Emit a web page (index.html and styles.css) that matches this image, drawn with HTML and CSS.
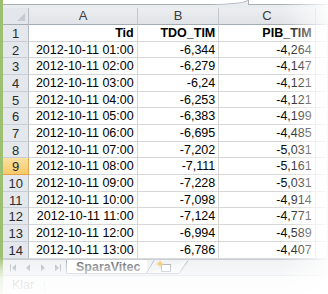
FILE: index.html
```html
<!DOCTYPE html>
<html lang="sv">
<head>
<meta charset="UTF-8">
<title>SparaVitec</title>
<link rel="stylesheet" href="styles.css">
</head>
<body>
  <div class="window">
    <div class="edge"></div>
    <div class="main">
      <div class="formula-area">
        <div class="formula-box"></div>
        <div class="right-box"></div>
      </div>

      <div class="sheet">
        <div class="corner"><span class="tri"></span></div>
        <div class="colhead">A</div>
        <div class="colhead">B</div>
        <div class="colhead">C</div>
        <div class="colhead last"></div>

        <div class="rowhead">1</div>
        <div class="cell bold">Tid</div>
        <div class="cell bold">TDO_TIM</div>
        <div class="cell bold">PIB_TIM</div>
        <div class="cell"></div>

        <div class="rowhead">2</div>
        <div class="cell">2012-10-11 01:00</div>
        <div class="cell">-6,344</div>
        <div class="cell">-4,264</div>
        <div class="cell"></div>

        <div class="rowhead">3</div>
        <div class="cell">2012-10-11 02:00</div>
        <div class="cell">-6,279</div>
        <div class="cell">-4,147</div>
        <div class="cell"></div>

        <div class="rowhead">4</div>
        <div class="cell">2012-10-11 03:00</div>
        <div class="cell">-6,24</div>
        <div class="cell">-4,121</div>
        <div class="cell"></div>

        <div class="rowhead">5</div>
        <div class="cell">2012-10-11 04:00</div>
        <div class="cell">-6,253</div>
        <div class="cell">-4,121</div>
        <div class="cell"></div>

        <div class="rowhead">6</div>
        <div class="cell">2012-10-11 05:00</div>
        <div class="cell">-6,383</div>
        <div class="cell">-4,199</div>
        <div class="cell"></div>

        <div class="rowhead">7</div>
        <div class="cell">2012-10-11 06:00</div>
        <div class="cell">-6,695</div>
        <div class="cell">-4,485</div>
        <div class="cell"></div>

        <div class="rowhead">8</div>
        <div class="cell">2012-10-11 07:00</div>
        <div class="cell">-7,202</div>
        <div class="cell">-5,031</div>
        <div class="cell"></div>

        <div class="rowhead sel">9</div>
        <div class="cell">2012-10-11 08:00</div>
        <div class="cell">-7,111</div>
        <div class="cell">-5,161</div>
        <div class="cell"></div>

        <div class="rowhead">10</div>
        <div class="cell">2012-10-11 09:00</div>
        <div class="cell">-7,228</div>
        <div class="cell">-5,031</div>
        <div class="cell"></div>

        <div class="rowhead">11</div>
        <div class="cell">2012-10-11 10:00</div>
        <div class="cell">-7,098</div>
        <div class="cell">-4,914</div>
        <div class="cell"></div>

        <div class="rowhead">12</div>
        <div class="cell">2012-10-11 11:00</div>
        <div class="cell">-7,124</div>
        <div class="cell">-4,771</div>
        <div class="cell"></div>

        <div class="rowhead">13</div>
        <div class="cell">2012-10-11 12:00</div>
        <div class="cell">-6,994</div>
        <div class="cell">-4,589</div>
        <div class="cell"></div>

        <div class="rowhead">14</div>
        <div class="cell">2012-10-11 13:00</div>
        <div class="cell">-6,786</div>
        <div class="cell">-4,407</div>
        <div class="cell"></div>
      </div>

      <div class="tabs">
        <div class="nav">
          <svg width="8" height="8" viewBox="0 0 8 8"><rect x="1" y="0.5" width="1" height="7"/><path d="M7 0.5 L3 4 L7 7.5 Z"/></svg>
          <svg width="8" height="8" viewBox="0 0 8 8"><path d="M6 0.5 L2 4 L6 7.5 Z"/></svg>
          <svg width="8" height="8" viewBox="0 0 8 8"><path d="M2 0.5 L6 4 L2 7.5 Z"/></svg>
          <svg width="8" height="8" viewBox="0 0 8 8"><path d="M1 0.5 L5 4 L1 7.5 Z"/><rect x="6" y="0.5" width="1" height="7"/></svg>
        </div>
        <div class="tab">SparaVitec</div>
        <svg class="newtab" width="46" height="16" viewBox="0 0 46 16">
          <path d="M0 13.5 L8 0.5" stroke="#9aa3ad" fill="none"/>
          <path d="M0 13.5 L33 13.5 L42 0.5" stroke="#9aa3ad" fill="#f4f5f7"/>
          <rect x="15.5" y="4.5" width="9" height="7" fill="#fff" stroke="#8a939c"/>
          <circle cx="14" cy="4" r="2.2" fill="#f2b84b"/>
          <path d="M14 0.5 V7.5 M10.5 4 H17.5" stroke="#f2b84b" stroke-width="0.9"/>
        </svg>
      </div>

      <div class="status">
        <span class="ready">Klar</span>
        <span class="sep"></span>
      </div>
    </div>
    <div class="fade-right"></div>
    <div class="fade-bottom"></div>
  </div>
</body>
</html>
```

FILE: styles.css
```css
* {
  box-sizing: border-box;
}

body {
  margin: 0;
  background: #FFF;
  font-family: "Liberation Sans", Arial, sans-serif;
}

.window {
  position: relative;
  display: flex;
  width: 328px;
  height: 294px;
  overflow: hidden;
}

.edge {
  width: 3px;
  background: #9dbf72;
}

.main {
  flex: 1;
  display: flex;
  flex-direction: column;
  min-width: 0;
}

/* formula bar remains */
.formula-area {
  display: flex;
  height: 9px;
  background: #e9ecef;
}

.formula-box {
  width: 245px;
  height: 5px;
  background: #FFF;
  border-bottom: 1px solid #a9b0b8;
  border-right: 1px solid #a9b0b8;
  border-bottom-right-radius: 36px 5px;
}

.right-box {
  flex: 1;
  height: 5px;
  background: #FFF;
  border-bottom: 1px solid #a9b0b8;
  border-left: 1px solid #a9b0b8;
}

/* grid */
.sheet {
  display: grid;
  grid-template-columns: 26.3px 108.4px 81.6px 96.4px 1fr;
  grid-template-rows: 17px repeat(14, 16.7px);
  font-size: 12.5px;
}

.corner {
  position: relative;
  background: #e3e6ea;
  border-right: 1px solid #b9bfc6;
  border-bottom: 1px solid #a3abb4;
}

.corner .tri {
  position: absolute;
  right: 3px;
  bottom: 3px;
  width: 0;
  height: 0;
  border-left: 8px solid transparent;
  border-bottom: 8px solid #c6cbd1;
}

.colhead {
  background: linear-gradient(#eceef1, #e0e3e7);
  border-right: 1px solid #c3c8ce;
  border-bottom: 1px solid #a3abb4;
  color: #3c3c3c;
  font-size: 13px;
  line-height: 16px;
  text-align: center;
}

.colhead.last {
  border-right: none;
}

.rowhead {
  background: #e4e7eb;
  border-right: 1px solid #b3bac2;
  border-bottom: 1px solid #c9ced4;
  color: #2b2b2b;
  font-size: 13px;
  line-height: 15.7px;
  padding-top: 1px;
  text-align: center;
}

.rowhead.sel {
  background: linear-gradient(#fbe0a0, #f6c96b);
  border-right-color: #e2a443;
  border-bottom-color: #e2a443;
}

.cell {
  border-right: 1px solid #d6d6d6;
  border-bottom: 1px solid #d6d6d6;
  color: #000;
  line-height: 15.7px;
  padding: 1px 3px 0 0;
  text-align: right;
  white-space: nowrap;
  overflow: hidden;
}

.cell.bold {
  font-weight: bold;
}

/* sheet tabs */
.tabs {
  display: flex;
  align-items: flex-start;
  height: 16.5px;
  background: linear-gradient(#eef0f2, #e2e5e9);
  border-top: 1px solid #c1c7ce;
}

.nav {
  display: flex;
  gap: 7px;
  width: 63px;
  padding: 4px 0 0 6px;
  fill: #8d969f;
}

.tab {
  width: 81px;
  height: 14.5px;
  background: #FFF;
  border-left: 1px solid #9aa3ad;
  border-bottom: 1px solid #9aa3ad;
  color: #3a3f45;
  font-size: 12.5px;
  font-weight: bold;
  line-height: 14px;
  padding-left: 9px;
}

.newtab {
  display: block;
  margin-left: -1px;
}

/* status bar */
.status {
  flex: 1;
  display: flex;
  align-items: center;
  gap: 10px;
  background: #eef0f2;
  border-top: 1px solid #b9bfc6;
  padding-left: 9px;
  color: #4a4a4a;
  font-size: 12.5px;
}

.sep {
  width: 1px;
  height: 12px;
  margin-top: 6px;
  background: #b0b6bd;
}

/* photo fades */
.fade-right {
  position: absolute;
  top: 0;
  right: 0;
  width: 46px;
  height: 100%;
  background: linear-gradient(to right, rgba(255,255,255,0) 0, rgba(255,255,255,.5) 60%, rgba(255,255,255,.88) 100%);
  pointer-events: none;
}

.fade-bottom {
  position: absolute;
  left: 0;
  right: 0;
  bottom: 0;
  height: 37px;
  background: linear-gradient(to bottom, rgba(255,255,255,0) 0, rgba(255,255,255,.5) 28%, rgba(255,255,255,.82) 55%, rgba(255,255,255,.95) 100%);
  pointer-events: none;
}
```
